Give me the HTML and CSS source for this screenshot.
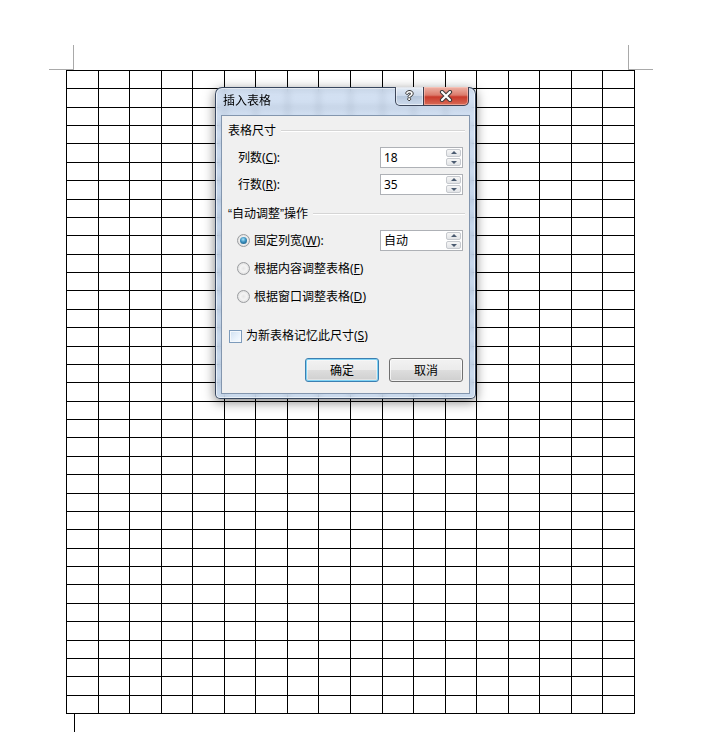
FILE: index.html
```html
<!DOCTYPE html>
<html lang="zh-CN">
<head>
<meta charset="utf-8">
<title>插入表格</title>
<link rel="stylesheet" href="styles.css">
</head>
<body>
<div class="page">
  <div class="crop crop-tl"></div>
  <div class="crop crop-tr"></div>
  <div class="grid" id="grid"></div>
  <div class="caret"></div>

  <div class="dialog">
    <div class="titlebar">
      <span class="title">插入表格</span>
      <div class="caption-btns">
        <div class="cap cap-help"><span>?</span></div>
        <div class="cap cap-close">
          <svg width="14" height="12" viewBox="0 0 14 12">
            <path d="M3 2 L11 10 M11 2 L3 10" stroke="#3b3b3b" stroke-width="4.2" stroke-linecap="round" fill="none"/>
            <path d="M3 2 L11 10 M11 2 L3 10" stroke="#ffffff" stroke-width="2.2" stroke-linecap="round" fill="none"/>
          </svg>
        </div>
      </div>
    </div>
    <div class="client">
      <div class="group-head"><span>表格尺寸</span><span class="rule"></span></div>
      <div class="row row-a">
        <span class="label">列数(<u>C</u>):</span>
        <div class="spin"><span class="val">18</span><span class="arrows"><span class="arr up"></span><span class="arr down"></span></span></div>
      </div>
      <div class="row row-b">
        <span class="label">行数(<u>R</u>):</span>
        <div class="spin"><span class="val">35</span><span class="arrows"><span class="arr up"></span><span class="arr down"></span></span></div>
      </div>
      <div class="group-head head2"><span><span class="q">“</span>自动调整<span class="q">”</span>操作</span><span class="rule"></span></div>
      <div class="row radio-row">
        <span class="label"><span class="radio on"></span>固定列宽(<u>W</u>):</span>
        <div class="spin"><span class="val">自动</span><span class="arrows"><span class="arr up"></span><span class="arr down"></span></span></div>
      </div>
      <div class="row radio-row">
        <span class="label wide"><span class="radio"></span>根据内容调整表格(<u>F</u>)</span>
      </div>
      <div class="row radio-row">
        <span class="label wide"><span class="radio"></span>根据窗口调整表格(<u>D</u>)</span>
      </div>
      <div class="check-row"><span class="check"></span>为新表格记忆此尺寸(<u>S</u>)</div>
      <div class="buttons">
        <button class="btn btn-default">确定</button>
        <button class="btn">取消</button>
      </div>
    </div>
  </div>
</div>
<script src="script.js"></script>
</body>
</html>
```

FILE: styles.css
```css
* { box-sizing: border-box; }
html, body { margin: 0; background: #ffffff; }
body {
  font-family: "Noto Sans", "Noto Sans CJK SC", sans-serif;
  font-size: 12px;
  color: #000;
}
.page {
  position: relative;
  width: 712px;
  height: 752px;
  padding: 70px 0 0 66px;
  overflow: hidden;
}
.crop {
  position: absolute;
  top: 45px;
  width: 25px;
  height: 25px;
  border-bottom: 1px solid #a9a9a9;
}
.crop-tl { left: 49px; border-right: 1px solid #a9a9a9; }
.crop-tr { left: 628px; border-left: 1px solid #a9a9a9; }

.grid {
  display: grid;
  width: 569px;
  height: 644px;
  grid-template-columns: repeat(18, 1fr);
  grid-template-rows: repeat(35, 1fr);
  border-left: 1px solid #000;
  border-top: 1px solid #000;
}
.grid > div {
  border-right: 1px solid #000;
  border-bottom: 1px solid #000;
}
.caret {
  width: 1px;
  height: 18px;
  margin-left: 8px;
  background: #000;
}

/* dialog */
.dialog {
  position: absolute;
  left: 215px;
  top: 87px;
  width: 261px;
  height: 312px;
  display: flex;
  flex-direction: column;
  padding: 0 5px 4px 5px;
  border: 1px solid rgba(40, 55, 80, 0.9);
  border-radius: 7px 7px 5px 5px;
  background: linear-gradient(180deg, rgba(196, 214, 238, 0.74) 0%, rgba(172, 196, 226, 0.7) 40%, rgba(182, 204, 230, 0.72) 100%);
  -webkit-backdrop-filter: blur(3px);
  backdrop-filter: blur(3px);
  box-shadow: inset 0 0 0 1px rgba(255, 255, 255, 0.6), 0 3px 12px rgba(0, 0, 0, 0.5);
}
.titlebar {
  height: 27px;
  display: flex;
  align-items: flex-start;
}
.title {
  margin: 5px 0 0 2px;
  line-height: 16px;
  color: #000;
}
.caption-btns {
  margin: -1px 1px 0 auto;
  display: flex;
}
.cap {
  height: 19px;
  border: 1px solid rgba(45, 55, 75, 0.9);
  border-top: none;
  display: flex;
  align-items: center;
  justify-content: center;
}
.cap-help {
  width: 28px;
  border-right: none;
  border-radius: 0 0 0 5px;
  background: linear-gradient(180deg, rgba(235, 242, 250, 0.8) 0%, rgba(200, 212, 228, 0.7) 50%, rgba(170, 188, 210, 0.7) 51%, rgba(205, 218, 235, 0.8) 100%);
  box-shadow: inset 0 0 0 1px rgba(255, 255, 255, 0.5);
}
.cap-help span {
  font-family: "Liberation Sans", sans-serif;
  font-weight: bold;
  font-size: 13px;
  line-height: 14px;
  color: #fff;
  text-shadow: 1px 0 0 #3a3a3a, -1px 0 0 #3a3a3a, 0 1px 0 #3a3a3a, 0 -1px 0 #3a3a3a;
}
.cap-close {
  width: 46px;
  border-radius: 0 0 5px 0;
  background: linear-gradient(180deg, #eeb4a8 0%, #dc7b6c 45%, #c93a2c 55%, #d86b56 100%);
  box-shadow: inset 0 0 0 1px rgba(255, 210, 200, 0.5);
}
.cap-close svg { display: block; }

.client {
  flex: 1;
  background: #f0f0f0;
  border: 1px solid #8396ae;
  padding-top: 6px;
  display: flex;
  flex-direction: column;
}
.group-head {
  height: 18px;
  display: flex;
  align-items: center;
  padding: 0 4px 0 6px;
  line-height: 18px;
}
.group-head .rule {
  flex: 1;
  height: 2px;
  margin-left: 5px;
  border-top: 1px solid #d5d5d5;
  border-bottom: 1px solid #ffffff;
}
.q { font-family: "Liberation Sans", sans-serif; }
.head2 { margin-top: 10px; }
.row {
  height: 21px;
  display: flex;
  align-items: center;
}
.row-a { margin-top: 7px; }
.row-b { margin-top: 6px; }
.radio-row { margin-top: 7px; }
.label {
  width: 158px;
  padding-left: 16px;
  display: flex;
  align-items: center;
  line-height: 16px;
  white-space: nowrap;
}
.label.wide { width: auto; }
.spin {
  width: 83px;
  height: 21px;
  background: #fff;
  border: 1px solid #aeb1b6;
  display: flex;
  align-items: stretch;
}
.val {
  flex: 1;
  padding-left: 3px;
  line-height: 19px;
}
.arrows {
  width: 17px;
  display: flex;
  flex-direction: column;
  padding: 1px;
  gap: 1px;
}
.arr {
  flex: 1;
  position: relative;
  border: 1px solid #c6c9ce;
  border-radius: 2px;
  background: linear-gradient(180deg, #f6f6f6, #e2e4e7);
}
.arr::after {
  content: "";
  position: absolute;
  left: 50%;
  top: 50%;
  margin-left: -3px;
  border-left: 3px solid transparent;
  border-right: 3px solid transparent;
}
.arr.up::after { margin-top: -2px; border-bottom: 3px solid #4b5b70; }
.arr.down::after { margin-top: -1px; border-top: 3px solid #4b5b70; }

.radio {
  width: 13px;
  height: 13px;
  border-radius: 50%;
  border: 1px solid #9a9c9f;
  background: radial-gradient(circle at 50% 50%, #e6e6e6 0%, #f4f4f4 40%, #d2d2d2 100%);
  margin-right: 4px;
  margin-left: -1px;
  flex: none;
  position: relative;
}
.radio.on::after {
  content: "";
  position: absolute;
  left: 2px;
  top: 2px;
  width: 7px;
  height: 7px;
  border-radius: 50%;
  background: radial-gradient(circle at 45% 35%, #a6e3fb 0%, #3a8fbd 45%, #134e73 100%);
}
.check-row {
  margin-top: 21px;
  height: 16px;
  display: flex;
  align-items: center;
  padding-left: 7px;
  line-height: 16px;
}
.check {
  width: 13px;
  height: 13px;
  border: 1px solid #7d9bbb;
  background: linear-gradient(135deg, #cfe0f1 0%, #eaf3fc 60%, #f9fcff 100%);
  box-shadow: inset 0 0 0 1px #f4f8fc;
  margin-right: 4px;
  flex: none;
}
.buttons {
  margin-top: 14px;
  display: flex;
  justify-content: flex-end;
  gap: 10px;
  padding-right: 6px;
}
.btn {
  width: 74px;
  height: 24px;
  padding: 0;
  font-family: inherit;
  font-size: 12px;
  color: #000;
  border: 1px solid #707070;
  border-radius: 3px;
  background: linear-gradient(180deg, #f2f2f2 0%, #ebebeb 50%, #dddddd 51%, #cfcfcf 100%);
  box-shadow: inset 0 0 0 1px rgba(255, 255, 255, 0.7);
}
.btn-default {
  border-color: #3c7fb1;
  box-shadow: inset 0 0 0 1px #7fd3f5, inset 0 0 0 2px rgba(255, 255, 255, 0.4);
}
```

FILE: script.js
```js
var grid = document.getElementById('grid');
for (var i = 0; i < 18 * 35; i++) {
  grid.appendChild(document.createElement('div'));
}
```
